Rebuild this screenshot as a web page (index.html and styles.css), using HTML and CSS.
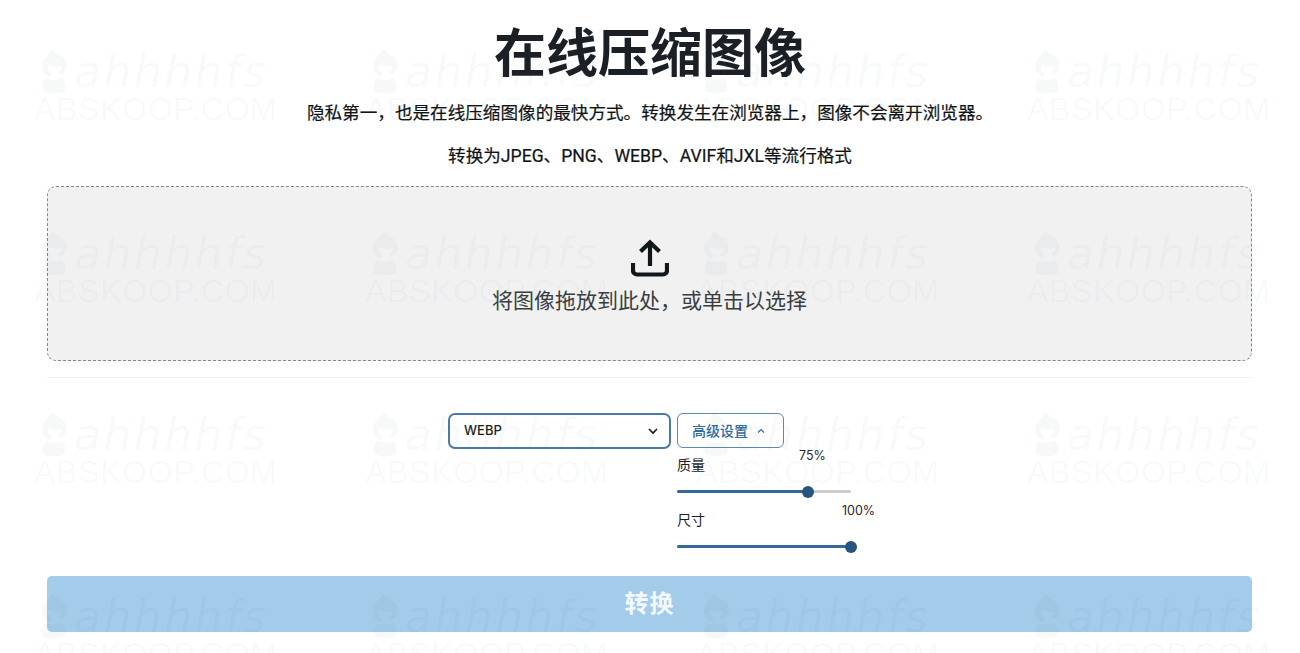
FILE: index.html
```html
<!DOCTYPE html>
<html lang="zh-CN">
<head>
<meta charset="utf-8">
<title>在线压缩图像</title>
<link rel="stylesheet" href="styles.css">
</head>
<body>
<svg class="defs" aria-hidden="true"><symbol id="fig" viewBox="0 0 28 46"><path d="M12 0c2 3 7 5 11 8 4 4 5 10 2 14-1 2-3 3-5 4l-2-3c2-1 4-3 4-6-3 1-9 1-14-1-1 3 1 7 4 9l-2 3C5 26 2 22 2 17 2 9 10 6 12 0z"/><path d="M6 29c5 2 11 2 16 0 3 3 4 8 3 13-5 3-17 3-22 0-1-5 0-10 3-13z"/></symbol></svg>
<main class="page">
  <h1 class="title">在线压缩图像</h1>
  <p class="lead lead-first">隐私第一，也是在线压缩图像的最快方式。转换发生在浏览器上，图像不会离开浏览器。</p>
  <p class="lead lead-second">转换为JPEG、PNG、WEBP、AVIF和JXL等流行格式</p>
  <section class="drop">
    <svg class="upload" viewBox="0 0 38 38" width="38" height="38" fill="none" stroke="#11181c" stroke-width="4.200" aria-hidden="true">
      <path d="M19 27V4M9.500 12.500 19 3.500l9.500 9"/>
      <path d="M2 24v7.500a4 4 0 0 0 4 4h26a4 4 0 0 0 4-4V24"/>
    </svg>
    <span class="drop-text">将图像拖放到此处，或单击以选择</span>
  </section>
  <hr class="rule">
  <section class="controls">
    <div class="select">
      <span class="select-label">WEBP</span>
      <svg viewBox="0 0 12 12" width="12" height="12" fill="none" stroke="#11181c" stroke-width="1.600" aria-hidden="true"><path d="M2 4l4 4 4-4"/></svg>
    </div>
    <div class="advanced">
      <div class="adv-btn">
        <span class="adv-label">高级设置</span>
        <svg viewBox="0 0 10 10" width="10" height="10" fill="none" stroke="#2f6b9f" stroke-width="1.200" aria-hidden="true"><path d="M2 6.500l3-3 3 3"/></svg>
      </div>
      <div class="slider slider-quality">
        <div class="slider-head"><span class="slider-name">质量</span><span class="slider-val val-q">75%</span></div>
        <div class="track"><div class="fill fill-q"><span class="thumb"></span></div></div>
      </div>
      <div class="slider slider-size">
        <div class="slider-head"><span class="slider-name">尺寸</span><span class="slider-val val-s">100%</span></div>
        <div class="track"><div class="fill fill-s"><span class="thumb"></span></div></div>
      </div>
    </div>
  </section>
  <div class="convert"><span class="convert-label">转换</span></div>
</main>
<div class="marks" aria-hidden="true">
  <div class="mark"><span class="mark-top"><svg class="mark-figure" width="28" height="46"><use href="#fig"/></svg><span class="mark-hand">ahhhhfs</span></span><span class="mark-url">ABSKOOP.COM</span></div>
  <div class="mark"><span class="mark-top"><svg class="mark-figure" width="28" height="46"><use href="#fig"/></svg><span class="mark-hand">ahhhhfs</span></span><span class="mark-url">ABSKOOP.COM</span></div>
  <div class="mark"><span class="mark-top"><svg class="mark-figure" width="28" height="46"><use href="#fig"/></svg><span class="mark-hand">ahhhhfs</span></span><span class="mark-url">ABSKOOP.COM</span></div>
  <div class="mark"><span class="mark-top"><svg class="mark-figure" width="28" height="46"><use href="#fig"/></svg><span class="mark-hand">ahhhhfs</span></span><span class="mark-url">ABSKOOP.COM</span></div>
  <div class="mark"><span class="mark-top"><svg class="mark-figure" width="28" height="46"><use href="#fig"/></svg><span class="mark-hand">ahhhhfs</span></span><span class="mark-url">ABSKOOP.COM</span></div>
  <div class="mark"><span class="mark-top"><svg class="mark-figure" width="28" height="46"><use href="#fig"/></svg><span class="mark-hand">ahhhhfs</span></span><span class="mark-url">ABSKOOP.COM</span></div>
  <div class="mark"><span class="mark-top"><svg class="mark-figure" width="28" height="46"><use href="#fig"/></svg><span class="mark-hand">ahhhhfs</span></span><span class="mark-url">ABSKOOP.COM</span></div>
  <div class="mark"><span class="mark-top"><svg class="mark-figure" width="28" height="46"><use href="#fig"/></svg><span class="mark-hand">ahhhhfs</span></span><span class="mark-url">ABSKOOP.COM</span></div>
  <div class="mark"><span class="mark-top"><svg class="mark-figure" width="28" height="46"><use href="#fig"/></svg><span class="mark-hand">ahhhhfs</span></span><span class="mark-url">ABSKOOP.COM</span></div>
  <div class="mark"><span class="mark-top"><svg class="mark-figure" width="28" height="46"><use href="#fig"/></svg><span class="mark-hand">ahhhhfs</span></span><span class="mark-url">ABSKOOP.COM</span></div>
  <div class="mark"><span class="mark-top"><svg class="mark-figure" width="28" height="46"><use href="#fig"/></svg><span class="mark-hand">ahhhhfs</span></span><span class="mark-url">ABSKOOP.COM</span></div>
  <div class="mark"><span class="mark-top"><svg class="mark-figure" width="28" height="46"><use href="#fig"/></svg><span class="mark-hand">ahhhhfs</span></span><span class="mark-url">ABSKOOP.COM</span></div>
  <div class="mark"><span class="mark-top"><svg class="mark-figure" width="28" height="46"><use href="#fig"/></svg><span class="mark-hand">ahhhhfs</span></span><span class="mark-url">ABSKOOP.COM</span></div>
  <div class="mark"><span class="mark-top"><svg class="mark-figure" width="28" height="46"><use href="#fig"/></svg><span class="mark-hand">ahhhhfs</span></span><span class="mark-url">ABSKOOP.COM</span></div>
  <div class="mark"><span class="mark-top"><svg class="mark-figure" width="28" height="46"><use href="#fig"/></svg><span class="mark-hand">ahhhhfs</span></span><span class="mark-url">ABSKOOP.COM</span></div>
  <div class="mark"><span class="mark-top"><svg class="mark-figure" width="28" height="46"><use href="#fig"/></svg><span class="mark-hand">ahhhhfs</span></span><span class="mark-url">ABSKOOP.COM</span></div>
</div>
</body>
</html>
```
FILE: styles.css
```css
* { box-sizing: border-box; }
html, body { margin: 0; height: 653px; overflow: hidden; background: #fff; }
body { font-family: "Liberation Sans", "Noto Sans CJK SC", sans-serif; color: #11181c; position: relative; }
.defs { position: absolute; width: 0; height: 0; }
.page { padding: 0 48px; display: flex; flex-direction: column; align-items: center; height: 653px; overflow: hidden; }
.title { margin: 17px 0 0; font: 700 52px/66px "Noto Sans CJK SC", sans-serif; color: #1a2025; }
.lead { margin: 0; font: 400 17.600px/24px Roboto, "Noto Sans CJK SC", sans-serif; color: #0f1316; -webkit-text-stroke: 0.200px #0f1316; }
.lead-first { margin-top: 18px; }
.lead-second { margin-top: 19px; }
.drop { margin-top: 18px; width: 1205px; margin-left: -1px; height: 175px; background: #f1f1f2; border: 1px dashed #85878a; border-radius: 9px; display: flex; flex-direction: column; align-items: center; padding-top: 52px; flex-shrink: 0; }
.upload { display: block; }
.drop-text { margin-top: 7px; font: 400 21px/30px "Noto Sans CJK SC", sans-serif; color: #3a3d40; }
.rule { width: 1205px; margin: 16px 0 0 -1px; border: 0; height: 1px; background: #f3f3f4; flex-shrink: 0; }
.controls { width: 100%; display: flex; justify-content: center; gap: 6px; margin-top: 35px; padding-right: 1px; align-items: flex-start; }
.select { width: 223px; height: 36px; border: 2px solid #4a7ba8; border-radius: 7px; background: #fff; display: flex; align-items: center; justify-content: space-between; padding: 0 10px 0 14px; font: 500 13px/16px Inter, sans-serif; color: #1b1f23; }
.select-label { position: relative; top: -1px; }
.advanced { width: 174px; }
.adv-btn { height: 35px; width: 107px; border: 1px solid #5b8ab2; border-radius: 6px; display: flex; align-items: center; justify-content: flex-start; padding-left: 14px; gap: 8px; font: 500 14px/18px "Noto Sans CJK SC", sans-serif; color: #2f6b9f; background: #fff; }
.adv-label { position: relative; top: -1px; }
.slider { width: 174px; }
.slider-head { display: flex; justify-content: space-between; position: relative; height: 26px; }
.slider-name { font: 400 14px/16px "Noto Sans CJK SC", sans-serif; color: #1d2125; }
.slider-val { position: absolute; font: 400 12.500px/16px Inter, sans-serif; color: #25292c; }
.slider-quality { margin-top: 8px; }
.val-q { left: 122px; top: -8px; }
.val-s { left: 165px; top: -8px; }
.slider-size { margin-top: 18px; }
.track { margin-top: 8px; height: 3px; border-radius: 2px; background: #c9ccd0; }
.fill { height: 3px; background: #34699a; border-radius: 2px; position: relative; }
.fill-q { width: 75%; }
.fill-s { width: 100%; }
.thumb { position: absolute; right: -6px; top: -4.500px; width: 12px; height: 12px; border-radius: 50%; background: #265580; }
.convert { margin: 28px 0 0 -1px; width: 1205px; height: 56px; background: #a3cbea; border-radius: 5px; display: flex; align-items: center; justify-content: center; font: 700 24px/32px "Noto Sans CJK SC", sans-serif; color: #f4f9fd; letter-spacing: 1px; flex-shrink: 0; }
.convert-label { position: relative; top: -2px; }
.marks { position: absolute; left: 34px; top: 45px; height: 608px; overflow: hidden; display: grid; grid-template-columns: repeat(4, 331px); grid-auto-rows: 181.500px; pointer-events: none; }
.mark { display: flex; flex-direction: column; width: 246px; height: 90px; color: rgba(60, 90, 100, 0.04); }
.mark-top { display: flex; align-items: flex-end; gap: 6px; height: 50px; padding-left: 6px; }
.mark-figure { fill: rgba(60, 90, 100, 0.04); flex-shrink: 0; }
.mark-hand { font: italic 400 44px/46px "DejaVu Sans", sans-serif; letter-spacing: 2.500px; white-space: nowrap; }
.mark-url { font: 400 32px/30px "Liberation Sans", sans-serif; letter-spacing: 0.700px; margin-top: -1px; white-space: nowrap; }
```
